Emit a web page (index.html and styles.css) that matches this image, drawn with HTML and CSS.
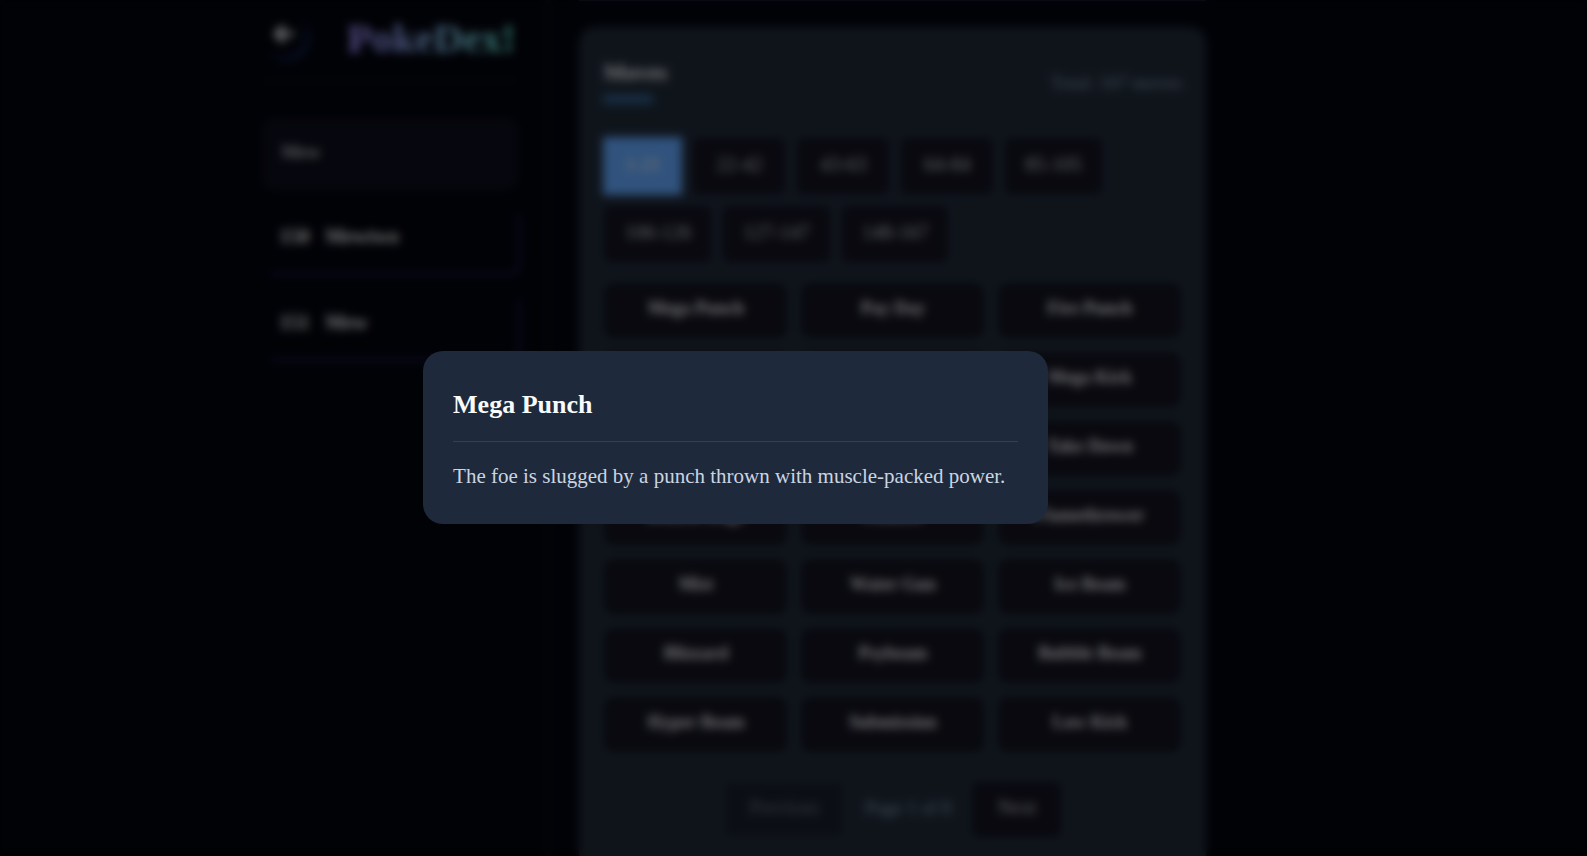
FILE: index.html
```html
<!DOCTYPE html>
<html lang="en">
<head>
<meta charset="utf-8">
<title>PokeDex!</title>
<link rel="stylesheet" href="styles.css">
</head>
<body>
<div class="page">
  <aside class="sidebar">
    <header class="brand">
      <button class="back" type="button" aria-label="Back">
        <svg viewBox="0 0 24 24" width="24" height="24" fill="none" stroke="currentColor" stroke-width="4"><path d="M21 12H4M11 4l-8 8 8 8"/></svg>
      </button>
      <h1 class="logo">PokeDex!</h1>
    </header>
    <input class="search" type="text" value="Mew" aria-label="Search">
    <ul class="results">
      <li><a class="result" href="#"><span>150</span><span>Mewtwo</span></a></li>
      <li><a class="result" href="#"><span>151</span><span>Mew</span></a></li>
    </ul>
  </aside>
  <main class="main">
    <section class="card">
      <header class="card-head">
        <h2 class="card-title">Moves</h2>
        <span class="total">Total: 167 moves</span>
      </header>
      <nav class="tabs">
        <button class="tab tab-active" type="button">1-21</button>
        <button class="tab" type="button">22-42</button>
        <button class="tab" type="button">43-63</button>
        <button class="tab" type="button">64-84</button>
        <button class="tab" type="button">85-105</button>
        <button class="tab" type="button">106-126</button>
        <button class="tab" type="button">127-147</button>
        <button class="tab" type="button">148-167</button>
      </nav>
      <div class="moves">
        <button class="move" type="button">Mega Punch</button>
        <button class="move" type="button">Pay Day</button>
        <button class="move" type="button">Fire Punch</button>
        <button class="move" type="button">Ice Punch</button>
        <button class="move" type="button">Thunder Punch</button>
        <button class="move" type="button">Mega Kick</button>
        <button class="move" type="button">Headbutt</button>
        <button class="move" type="button">Body Slam</button>
        <button class="move" type="button">Take Down</button>
        <button class="move" type="button">Double Edge</button>
        <button class="move" type="button">Counter</button>
        <button class="move" type="button">Flamethrower</button>
        <button class="move" type="button">Mist</button>
        <button class="move" type="button">Water Gun</button>
        <button class="move" type="button">Ice Beam</button>
        <button class="move" type="button">Blizzard</button>
        <button class="move" type="button">Psybeam</button>
        <button class="move" type="button">Bubble Beam</button>
        <button class="move" type="button">Hyper Beam</button>
        <button class="move" type="button">Submission</button>
        <button class="move" type="button">Low Kick</button>
      </div>
      <footer class="pager">
        <button class="pager-btn" type="button" disabled>Previous</button>
        <span class="pager-info">Page 1 of 8</span>
        <button class="pager-btn" type="button">Next</button>
      </footer>
    </section>
  </main>
</div>
<div class="overlay">
  <div class="modal" role="dialog" aria-labelledby="move-name">
    <h2 class="modal-title" id="move-name">Mega Punch</h2>
    <p class="modal-text">The foe is slugged by a punch thrown with muscle-packed power.</p>
  </div>
</div>
</body>
</html>
```
FILE: styles.css
```css
* { box-sizing: border-box; margin: 0; }
body {
  height: 100vh;
  overflow: hidden;
  background: #02040d;
  color: #e5e7eb;
  font-family: "Liberation Serif", serif;
}
button, input { font: inherit; color: inherit; }
.page {
  display: flex;
  height: 100vh;
  overflow: hidden;
  padding: 0 24% 0 16.6%;
}
.sidebar {
  flex: 0 0 288px;
  padding-right: 28px;
  border-right: 6px solid #090a12;
}
.brand {
  display: flex;
  align-items: center;
  justify-content: space-between;
  height: 82px;
  padding-bottom: 4px;
  border-bottom: 2px solid #14151b;
}
.back {
  display: flex;
  width: 48px;
  height: 48px;
  padding: 8px 10px;
  border: 0;
  border-radius: 50%;
  background: none;
  box-shadow: inset -6px -6px 2px #0c1838;
}
.logo {
  padding-right: 2px;
  font-size: 41px;
  line-height: 44px;
  background: linear-gradient(90deg, #a08cff, #8cbcf4 50%, #64f0d4);
  -webkit-background-clip: text;
  background-clip: text;
  color: transparent;
}
.search {
  display: block;
  width: 100%;
  height: 70px;
  margin-top: 37px;
  padding: 0 16px 4px;
  border: 2px solid #14151e;
  border-radius: 10px;
  background: #0c0c1c;
  font-size: 19px;
}
.results {
  display: grid;
  gap: 20px;
  padding: 17px 0 0;
  list-style: none;
}
.result {
  display: flex;
  gap: 16px;
  align-items: center;
  height: 66px;
  padding: 0 16px 6px;
  border-radius: 8px;
  box-shadow: inset 0 0 0 66px #02040d, 4px 4px 1px #131338;
  color: inherit;
  font-size: 20px;
  font-weight: bold;
  text-decoration: none;
}
.main { flex: 1; padding: 0 0 0 28px; }
.main::before {
  content: "";
  display: block;
  height: 1px;
  margin-bottom: 26px;
  background: #1e293b;
}
.card {
  min-height: 100%;
  padding: 24px;
  border-radius: 16px;
  background: #1f2937;
}
.card-head {
  display: flex;
  align-items: center;
  justify-content: space-between;
  margin-bottom: 35px;
}
.card-title {
  padding-top: 7px;
  font-size: 23px;
  line-height: 30px;
}
.card-title::after {
  content: "";
  display: block;
  width: 50px;
  height: 8px;
  margin-top: 7px;
  margin-bottom: -1px;
  border-radius: 2px;
  background: #2f6494;
}
.total { padding-top: 12px; font-size: 19px; color: #7d90a4; }
.tabs { display: flex; flex-wrap: wrap; gap: 10px; }
.tab {
  min-width: 94px;
  height: 58px;
  padding: 0 19px 4px;
  border: 2px solid #1d2036;
  background: #12121e;
  color: #bcc2cd;
  font-size: 20px;
}
.tab-active {
  min-width: 0;
  border-color: #60a5fa;
  background: #60a5fa;
  color: #f4eadf;
}
.moves {
  display: grid;
  grid-template-columns: repeat(3, 1fr);
  gap: 12px;
  margin-top: 19px;
}
.move {
  height: 57px;
  padding: 0 0 4px;
  border: 2px solid #182030;
  border-radius: 10px;
  background: #12121e;
  font-size: 18px;
  font-weight: bold;
}
.pager {
  display: flex;
  align-items: center;
  justify-content: center;
  gap: 20px;
  margin-top: 28px;
}
.pager-btn {
  height: 57px;
  padding: 0 24px 4px;
  border: 2px solid #1d2036;
  background: #12121e;
  font-size: 20px;
  color: #b8bcc5;
}
.pager-btn:disabled { opacity: .5; }
.pager-info { padding-bottom: 4px; font-size: 19px; color: #8197ad; }
.overlay {
  position: fixed;
  inset: 0;
  display: flex;
  align-items: center;
  justify-content: center;
  padding: 19px 24% 0 16.7%;
  background: rgba(0, 0, 0, .5);
  backdrop-filter: blur(5px);
}
.modal {
  width: 625px;
  padding: 30px;
  border-radius: 20px;
  background: #1e293b;
}
.modal-title {
  padding-bottom: 13px;
  border-bottom: 1px solid #334155;
  color: #f8fafc;
  font-size: 26px;
  line-height: 47px;
}
.modal-text {
  padding: 18px 0 2px;
  color: #cbd5e1;
  font-size: 21px;
  line-height: 32px;
}
```
